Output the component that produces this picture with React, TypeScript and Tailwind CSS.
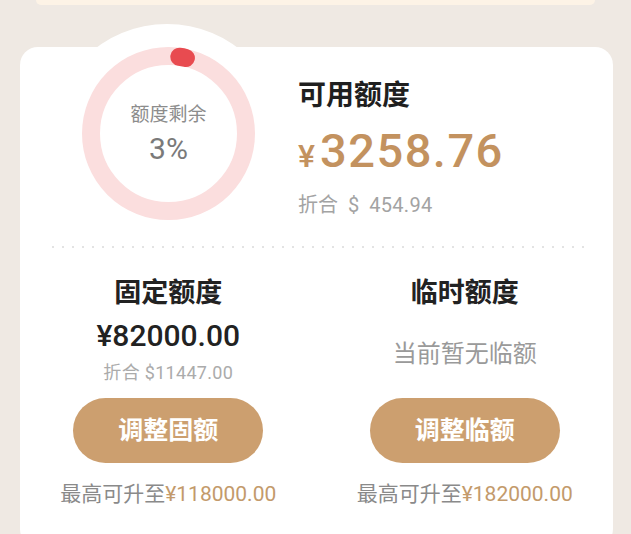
import React from 'react';

const font = 'font-["Roboto","Noto_Sans_CJK_SC",sans-serif]';

function Ring() {
  return (
    <div className="relative w-[173px] h-[173px] shrink-0">
      <svg className="absolute inset-0" width="173" height="173" viewBox="0 0 173 173">
        <circle cx="86.5" cy="86.5" r="77.5" fill="none" stroke="#fbdede" strokeWidth="18" />
        <path d="M 97.3 9.75 A 77.5 77.5 0 0 1 103.9 11.0" fill="none" stroke="#e84b50" strokeWidth="18" strokeLinecap="round" />
      </svg>
      <div className="relative flex flex-col items-center pt-[55px]">
        <p className="text-[19px] leading-[26px] text-[#8c8c8c]">额度剩余</p>
        <p className="mt-[3px] text-[30px] leading-[36px] text-[#7a7a7a]">3%</p>
      </div>
    </div>
  );
}

function LimitColumn({ title, button, max, children }: { title: string; button: string; max: string; children: React.ReactNode }) {
  return (
    <div className="flex flex-col items-center">
      <h3 className="text-[27px] leading-[34px] font-bold text-[#222]">{title}</h3>
      <div className="mt-[8px] h-[66px] flex flex-col items-center">{children}</div>
      <button className="mt-[14px] w-[190px] h-[65px] rounded-full bg-[#cc9f6f] text-white text-[25px] font-bold">
        {button}
      </button>
      <p className="mt-[18px] text-[21px] leading-[26px] text-[#8a8a8a]">
        最高可升至<span className="text-[#c39a6b]">¥{max}</span>
      </p>
    </div>
  );
}

export default function App() {
  return (
    <div className={`min-h-screen bg-[#efe9e3] overflow-hidden ${font}`}>
      <div className="mx-[36px] h-[5px] bg-[#fdf3e6] rounded-b-[6px]" />

      <div className="relative mt-[42px] ml-[20px] mr-[18px] bg-white rounded-[18px] pb-[40px]">
        <div className="absolute left-[29px] -top-[23px] w-[236px] h-[236px] rounded-full bg-white" />

        <div className="relative">
          <div className="flex items-start h-[199px]">
            <div className="ml-[62px]">
              <Ring />
            </div>
            <div className="ml-[43px] pt-[32px]">
              <h2 className="text-[28px] leading-[34px] font-bold text-[#1f1f1f]">可用额度</h2>
              <div className="mt-[13px] flex items-baseline text-[#c3925f] leading-[50px] font-medium">
                <span className="text-[32px] mr-[5px]">¥</span>
                <span className="text-[47px] tracking-[1.5px]">3258.76</span>
              </div>
              <p className="mt-[12px] text-[20px] leading-[24px] text-[#a3a3a3]">
                折合<span className="ml-[10px]">$</span>
                <span className="ml-[10px] tracking-[0.3px]">454.94</span>
              </p>
            </div>
          </div>

          <div className="mx-[28px] h-[2px] bg-[radial-gradient(circle,#e3e3e3_1px,transparent_1.2px)] bg-[length:10px_2px]" />

          <div className="grid grid-cols-2 pt-[28px]">
            <LimitColumn title="固定额度" button="调整固额" max="118000.00">
              <p className="text-[30px] leading-[36px] text-[#222] font-medium">¥82000.00</p>
              <p className="mt-[8px] text-[18px] leading-[22px] text-[#ababab] tracking-[0.3px]">折合 $11447.00</p>
            </LimitColumn>
            <LimitColumn title="临时额度" button="调整临额" max="182000.00">
              <div className="h-full flex items-center pt-[6px]">
                <p className="text-[24px] leading-[30px] text-[#9a9a9a]">当前暂无临额</p>
              </div>
            </LimitColumn>
          </div>
        </div>
      </div>
    </div>
  );
}
